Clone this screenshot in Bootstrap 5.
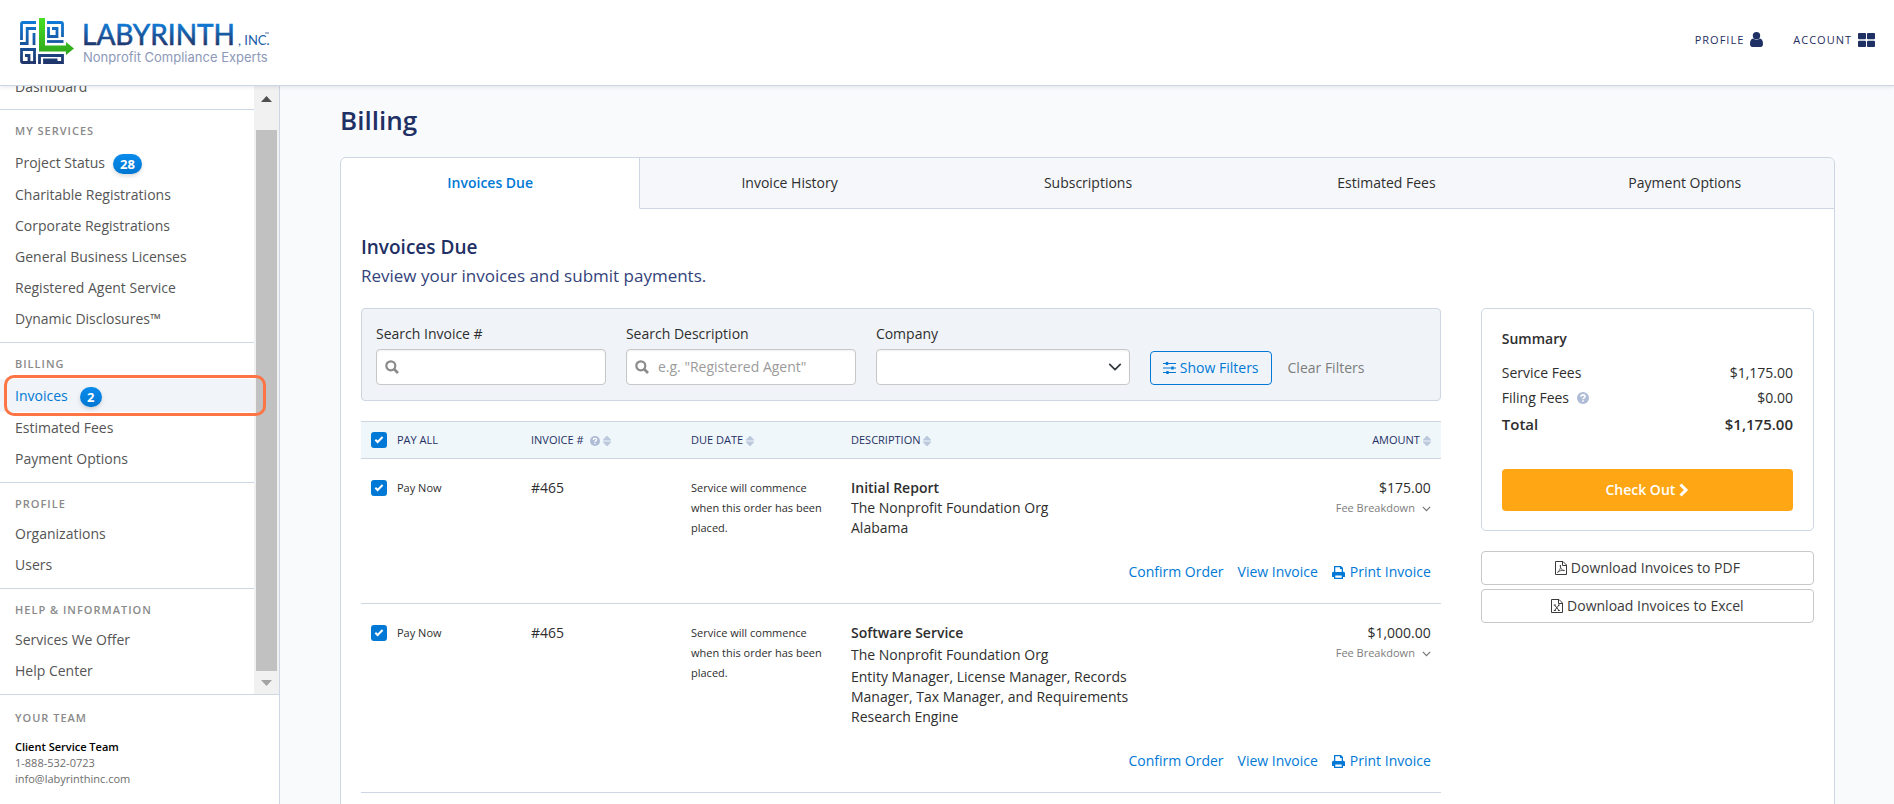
<!DOCTYPE html>
<html lang="en">
<head>
<meta charset="utf-8">
<meta name="viewport" content="width=device-width, initial-scale=1">
<title>Billing</title>
<link href="https://cdn.jsdelivr.net/npm/bootstrap@5.3.0/dist/css/bootstrap.min.css" rel="stylesheet">
<style>
:root{--navy:#1f3064;--blue:#0079d6;--line:#cdd6e3;--ink:#2e2e2e}
body{font-family:"Open Sans","Noto Sans",sans-serif;font-size:14px;line-height:20px;color:var(--ink);background:#f9fafc}
a{color:var(--blue);text-decoration:none}
svg{flex:none}
.app{height:100vh;overflow:hidden}
.topbar{height:86px;background:#fff;border-bottom:1px solid var(--line);box-shadow:0 1px 4px rgba(40,60,100,.12);padding:0 19px 0 18px;z-index:2}
.top-links{gap:30px;padding-bottom:6px}
.top-link{color:var(--navy);font-size:11px;font-weight:500;letter-spacing:1px;gap:6px}
.brand-name{font-family:"Lato",sans-serif;font-size:28px}
.brand-inc{font-family:"Lato",sans-serif;font-size:13px}
.brand-tag{font-family:"Inter",sans-serif;font-size:13px}
.side{width:280px;background:#fff;border-right:1px solid var(--line)}
.shell{min-height:0}
.side-scroll{overflow:hidden;min-height:0}
.side-list{min-width:0}
.bar{width:25px;background:#f1f1f1;padding:10px 2px 8px}
.thumb{background:#c1c1c1;width:21px;margin:28px 0 9px}
.first-item{padding-bottom:7px}
.group{border-top:1px solid var(--line);padding-bottom:8px}
.cap-head{font-size:11px;line-height:16px;font-weight:600;letter-spacing:1px;color:#8a8a8a;text-transform:uppercase;margin:0}
.group .cap-head{padding:13px 15px 6px}
.item{height:31px;padding:0 15px;color:#555;display:flex;align-items:center}
.item.has-count{height:33px;margin-top:1px;position:relative}
.item.on{background:#f1f4f8;color:var(--blue)}
.count{background:linear-gradient(#0a8bec,#0077d2);color:#fff;font-weight:700;font-size:13px;line-height:20px;min-width:22px;text-align:center;padding:0 7px;border-radius:10px;box-shadow:0 2px 4px rgba(0,0,0,.15);margin:2px 0 0 8px}
.on .count{margin-left:12px}
.callout{position:absolute;inset:-4px -12px -4px 4px;border:3px solid #fd7544;border-radius:10px;z-index:1}
.team{border-top:1px solid var(--line);padding:15px;height:110px;font-size:11px;line-height:16px;color:#6d6d6d}
.team .cap-head{margin-bottom:13px}
.team a{color:inherit}
.main{padding:16px 59px 0 60px;overflow:hidden;min-width:0}
h1{font-size:26px;line-height:36px;font-weight:600;color:var(--navy);margin:0 0 19px}
h2{font-size:19px;line-height:28px;font-weight:600;color:var(--navy);margin:0 0 3px}
.lede{font-size:17px;line-height:24px;color:#33437a;margin:0 0 20px}
.panel{background:#fff;border:1px solid var(--line);border-radius:6px;min-height:720px}
.tabs a{color:var(--ink);background:#f5f7fb;border-bottom:1px solid var(--line);padding:15px 0;text-align:center;line-height:20px;flex:1 1 0}
.tabs a.on{background:#fff;border-right:1px solid var(--line);border-bottom-color:#fff;color:var(--blue);font-weight:600;border-radius:6px 0 0 0}
.tabs a:last-child{border-radius:0 6px 0 0}
.body-pad{padding:24px 20px 0}
.split{--bs-gutter-x:40px}
.filters{background:#f0f4f8;border:1px solid var(--line);border-radius:4px;padding:15px 14px;display:grid;grid-template-columns:115fr 115fr 127fr 138fr;column-gap:20px}
.filters label{display:block;line-height:20px;margin-bottom:5px}
.filters .form-control,.filters .form-select{height:36px;font-size:14px;border:1px solid #c8c8c8;border-radius:4px;padding:4px 12px 6px 31px;color:var(--ink);box-shadow:inset 0 1px 2px rgba(0,0,0,.06)}
.filters .form-select{background-position:right 7px center;background-size:14px 14px}
.filters .form-control::placeholder{color:#9b9b9b}
.glass{position:absolute;left:9px;top:11px}
.btn{font-size:14px;line-height:20px;border-radius:4px}
.btn-filter{height:34px;border:1px solid var(--blue);color:var(--blue);padding:0 12px}
.btn-filter:hover{background:var(--blue);color:#fff}
.quiet{color:#7d7d7d}
.btn-clear{height:34px}
.inv{margin:20px 0 0;table-layout:fixed;width:100%;color:var(--ink)}
.inv .w-col{width:160px}
.inv .w-desc{width:300px}
.inv th{background:#eff7fb;border-top:1px solid var(--line);border-bottom:1px solid var(--line);height:37px;padding:0 10px;font-size:11px;line-height:16px;font-weight:500;color:var(--navy);vertical-align:middle}
.inv td{padding:19px 10px 0;vertical-align:top}
.inv .acts td{padding:24px 10px 21px;border-bottom:1px solid var(--line)}
.acts-row{gap:14px}
.print-link{gap:5px}
.fine{font-size:11px;line-height:20px}
.pay{gap:10px;line-height:20px;font-size:11px;font-weight:500}
.inv .form-check-input{width:16px;height:16px;border-radius:3px;margin:0;border:0;background-size:16px;flex:none}
.form-check-input:checked{background-color:var(--blue);background-image:url("data:image/svg+xml,%3csvg xmlns='http://www.w3.org/2000/svg' viewBox='0 0 16 16'%3e%3cpath fill='none' stroke='%23fff' stroke-width='2' d='M4.300 7.700l2.300 2.300 5-5'/%3e%3c/svg%3e")}
.stack{gap:2px}
.summary{border:1px solid var(--line);border-radius:5px;padding:20px 20px 19px}
.summary dl{margin:11px 0 32px}
.summary dt,.summary dd{font-weight:400;margin:0;line-height:25px}
.summary .total{font-size:15px;margin-top:2px}
.summary .total dt,.summary .total dd{font-weight:600}
.btn-pay{background:#ffa614;color:#fff;font-weight:600;height:42px}
.btn-pay:hover{background:#f09a08;color:#fff}
.btn-dl{background:#fff;border:1px solid #c8c8c8;color:#3a3a3a;height:34px;padding:0}
.downloads{margin-top:20px;gap:4px}
</style>
</head>
<body>
<svg width="0" height="0" class="position-absolute" aria-hidden="true">
  <defs>
    <linearGradient id="word" gradientUnits="userSpaceOnUse" x1="0" y1="23" x2="0" y2="46"><stop offset="0" stop-color="#0f7ddb"/><stop offset="1" stop-color="#1f3468"/></linearGradient>
    <linearGradient id="maze" gradientUnits="userSpaceOnUse" x1="0" y1="20" x2="0" y2="64"><stop offset="0" stop-color="#0f7ddb"/><stop offset="1" stop-color="#1f3468"/></linearGradient>
    <linearGradient id="ell" x1="0" y1="0" x2="0" y2="1"><stop offset="0" stop-color="#46e024"/><stop offset="1" stop-color="#2fa51c"/></linearGradient>
  </defs>
  <symbol id="sort" viewBox="0 0 8 10"><path fill="#bcc8dc" d="M3.500 0h1L8 3.800v.8H0v-.8zM3.500 10h1L8 6.200v-.8H0v.8z"/></symbol>
  <symbol id="help" viewBox="0 0 12 12"><circle cx="6" cy="6" r="6" fill="#afbcd6"/><path d="M4 4.700C4 2.300 8 2.300 8 4.500 8 5.800 6 5.800 6 7.300" fill="none" stroke="#fff" stroke-width="1.600"/><path d="M5.200 8.200h1.600v1.500H5.200z" fill="#fff"/></symbol>
  <symbol id="glass" viewBox="0 0 14 14"><circle cx="5.800" cy="5.800" r="4.500" fill="none" stroke="#8b8b8b" stroke-width="2.200"/><path d="M9 9l4 4" stroke="#8b8b8b" stroke-width="2.600"/></symbol>
  <symbol id="print" viewBox="0 0 13 13"><path fill="#0079d6" fill-rule="evenodd" d="M2 0h7l2 2v3.700h.5A1.500 1.500 0 0 1 13 7.200V11h-2v2H2v-2H0V7.200A1.500 1.500 0 0 1 1.500 5.700H2zm1.300 1.300v4.700h6.400V3H8V1.300zm0 8.200v2.200h6.400V9.500z"/></symbol>
  <symbol id="down" viewBox="0 0 9 6"><path d="M.8.8l3.700 3.800L8.200.8" fill="none" stroke="#777" stroke-width="1.200"/></symbol>
</svg>
<div class="app d-flex flex-column">
  <header class="topbar d-flex align-items-center justify-content-between flex-shrink-0">
    <a href="#" aria-label="Labyrinth, Inc.">
      <svg width="262" height="54" viewBox="18 16 262 54" class="d-block">
        <g fill="none" stroke="url(#maze)" stroke-width="2.800">
          <path d="M21.500 40V24a1.500 1.500 0 0 1 1.500-1.500H36"/>
          <path d="M20 43.500h7.200V28.500H36"/>
          <path d="M34 33v12"/>
          <path d="M47 22.500h14a1.500 1.500 0 0 1 1.500 1.500V37"/>
          <path d="M48.500 27v9.500h8.500V28.500h-5"/>
          <path d="M47 41.500h16.500"/>
          <path d="M36 49.500H21.500V61a1.500 1.500 0 0 0 1.500 1.500h6v-7h-4"/>
          <path d="M34.500 49v15"/>
          <path d="M30 62.500h6"/>
          <path d="M39.500 64v-8.500h23v7H44.500V60h13"/>
        </g>
        <path fill="url(#ell)" d="M39 18h6v27.500h21V42l8 6.500-8 6.500v-3.500H39z"/>
        <text class="brand-name" x="82" y="45" fill="url(#word)" stroke="url(#word)" stroke-width=".6">LABYRINTH</text>
        <text class="brand-inc" x="238" y="45" fill="#1a5ea8">, INC.</text>
        <text class="brand-tag" x="83" y="62" fill="#8d99b8">Nonprofit Compliance Experts</text>
        <path d="M265 33h4" stroke="#5570a5"/>
      </svg>
    </a>
    <nav class="top-links d-flex align-items-center">
      <a href="#" class="top-link d-flex align-items-center">PROFILE
        <svg width="13" height="15" viewBox="0 0 13 15" fill="#1f3064"><circle cx="6.500" cy="3.700" r="3.700"/><path d="M3.200 6.600a5 5 0 0 0 6.600 0C12 6.800 13 9 13 12c0 2-1 3-2.500 3h-8C1 15 0 14 0 12c0-3 1-5.200 3.200-5.400z"/></svg></a>
      <a href="#" class="top-link d-flex align-items-center">ACCOUNT
        <svg width="17" height="14" viewBox="0 0 17 14" fill="#1f3064"><rect width="8" height="6.300" rx="1"/><rect x="9" width="8" height="6.300" rx="1"/><rect y="7.700" width="8" height="6.300" rx="1"/><rect x="9" y="7.700" width="8" height="6.300" rx="1"/></svg></a>
    </nav>
  </header>
  <div class="shell d-flex flex-grow-1">
    <aside class="side d-flex flex-column flex-shrink-0">
      <div class="side-scroll d-flex flex-grow-1">
        <nav class="side-list flex-grow-1 d-flex flex-column justify-content-end">
          <div class="first-item"><a href="#" class="item">Dashboard</a></div>
          <div class="group"><h6 class="cap-head">My Services</h6>
            <a href="#" class="item has-count">Project Status <span class="count">28</span></a>
            <a href="#" class="item">Charitable Registrations</a>
            <a href="#" class="item">Corporate Registrations</a>
            <a href="#" class="item">General Business Licenses</a>
            <a href="#" class="item">Registered Agent Service</a>
            <a href="#" class="item">Dynamic Disclosures™</a>
          </div>
          <div class="group"><h6 class="cap-head">Billing</h6>
            <a href="#" class="item has-count on">Invoices <span class="count">2</span><span class="callout"></span></a>
            <a href="#" class="item">Estimated Fees</a>
            <a href="#" class="item">Payment Options</a>
          </div>
          <div class="group"><h6 class="cap-head">Profile</h6>
            <a href="#" class="item">Organizations</a>
            <a href="#" class="item">Users</a>
          </div>
          <div class="group"><h6 class="cap-head">Help &amp; Information</h6>
            <a href="#" class="item">Services We Offer</a>
            <a href="#" class="item">Help Center</a>
          </div>
        </nav>
        <div class="bar d-flex flex-column align-items-center flex-shrink-0" aria-hidden="true">
          <svg width="11" height="6"><path d="M0 6L5.500 0 11 6z" fill="#505050"/></svg>
          <div class="thumb flex-grow-1"></div>
          <svg width="11" height="6"><path d="M0 0l5.500 6L11 0z" fill="#a3a3a3"/></svg>
        </div>
      </div>
      <div class="team flex-shrink-0">
        <h6 class="cap-head">Your Team</h6>
        <div><span class="fw-semibold text-black">Client Service Team</span><br>1-888-532-0723<br><a href="#">info@labyrinthinc.com</a></div>
      </div>
    </aside>
    <main class="main flex-grow-1">
      <h1>Billing</h1>
      <div class="panel">
        <nav class="tabs d-flex">
          <a href="#" class="on">Invoices Due</a><a href="#">Invoice History</a><a href="#">Subscriptions</a><a href="#">Estimated Fees</a><a href="#">Payment Options</a>
        </nav>
        <div class="body-pad">
          <h2>Invoices Due</h2>
          <p class="lede">Review your invoices and submit payments.</p>
          <div class="row split">
            <div class="col-9">
              <form class="filters">
                <div><label for="num">Search Invoice #</label>
                  <div class="position-relative"><svg class="glass" width="14" height="14"><use href="#glass"/></svg><input id="num" type="text" class="form-control"></div></div>
                <div><label for="desc">Search Description</label>
                  <div class="position-relative"><svg class="glass" width="14" height="14"><use href="#glass"/></svg><input id="desc" type="text" class="form-control" placeholder="e.g. &quot;Registered Agent&quot;"></div></div>
                <div><label for="comp">Company</label><select id="comp" class="form-select"><option></option></select></div>
                <div class="d-flex align-items-end gap-3">
                  <button type="button" class="btn btn-filter d-flex align-items-center gap-1"><svg width="13" height="12" fill="none" stroke="currentColor"><path d="M0 1.500h13M0 6h13M0 10.500h13" stroke-width="1.200"/><path d="M4 0v3M9.500 4.500v3M4.500 9v3" stroke-width="2.400"/></svg>Show Filters</button>
                  <button type="reset" class="btn btn-clear quiet border-0 p-0">Clear Filters</button>
                </div>
              </form>
              <table class="inv">
                <colgroup><col class="w-col"><col class="w-col"><col class="w-col"><col class="w-desc"><col></colgroup>
                <thead><tr>
                  <th><label class="pay d-flex align-items-center"><input type="checkbox" class="form-check-input" checked>PAY ALL</label></th>
                  <th>INVOICE # <svg width="10" height="10" class="ms-1"><use href="#help"/></svg> <svg width="8" height="10"><use href="#sort"/></svg></th>
                  <th>DUE DATE <svg width="8" height="10"><use href="#sort"/></svg></th>
                  <th>DESCRIPTION <svg width="8" height="10"><use href="#sort"/></svg></th>
                  <th class="text-end">AMOUNT <svg width="8" height="10"><use href="#sort"/></svg></th>
                </tr></thead>
                <tbody>
                  <tr>
                    <td><label class="pay d-flex align-items-center"><input type="checkbox" class="form-check-input" checked>Pay Now</label></td>
                    <td>#465</td>
                    <td class="fine">Service will commence when this order has been placed.</td>
                    <td><div class="fw-semibold">Initial Report</div><div>The Nonprofit Foundation Org</div><div>Alabama</div></td>
                    <td class="text-end">$175.00<div class="fine quiet">Fee Breakdown <svg width="9" height="6" class="ms-1"><use href="#down"/></svg></div></td>
                  </tr>
                  <tr class="acts"><td colspan="5"><div class="acts-row d-flex justify-content-end"><a href="#">Confirm Order</a><a href="#">View Invoice</a><a href="#" class="print-link d-flex align-items-center"><svg width="13" height="13"><use href="#print"/></svg>Print Invoice</a></div></td></tr>
                  <tr>
                    <td><label class="pay d-flex align-items-center"><input type="checkbox" class="form-check-input" checked>Pay Now</label></td>
                    <td>#465</td>
                    <td class="fine">Service will commence when this order has been placed.</td>
                    <td><div class="stack d-flex flex-column"><div class="fw-semibold">Software Service</div><div>The Nonprofit Foundation Org</div><div>Entity Manager, License Manager, Records Manager, Tax Manager, and Requirements Research Engine</div></div></td>
                    <td class="text-end">$1,000.00<div class="fine quiet">Fee Breakdown <svg width="9" height="6" class="ms-1"><use href="#down"/></svg></div></td>
                  </tr>
                  <tr class="acts"><td colspan="5"><div class="acts-row d-flex justify-content-end"><a href="#">Confirm Order</a><a href="#">View Invoice</a><a href="#" class="print-link d-flex align-items-center"><svg width="13" height="13"><use href="#print"/></svg>Print Invoice</a></div></td></tr>
                </tbody>
              </table>
            </div>
            <div class="col-3">
              <section class="summary">
                <div class="fw-semibold">Summary</div>
                <dl>
                  <div class="d-flex justify-content-between"><dt>Service Fees</dt><dd>$1,175.00</dd></div>
                  <div class="d-flex justify-content-between"><dt class="d-flex align-items-center gap-2">Filing Fees <svg width="12" height="12"><use href="#help"/></svg></dt><dd>$0.00</dd></div>
                  <div class="total d-flex justify-content-between"><dt>Total</dt><dd>$1,175.00</dd></div>
                </dl>
                <button type="button" class="btn btn-pay w-100 d-flex align-items-center justify-content-center gap-1">Check Out <svg width="10" height="14" fill="none" stroke="#fff" stroke-width="3"><path d="M1.500 1.500L7 7l-5.500 5.500"/></svg></button>
              </section>
              <div class="downloads d-flex flex-column">
                <button type="button" class="btn btn-dl d-flex align-items-center justify-content-center gap-1"><svg width="12" height="14" fill="none" stroke="#3a3a3a"><path d="M.5.5h7.500L11.500 4v9.500H.5zM7.500.5v4h4"/><path d="M2.500 11.500C5 9 6 7 5.300 4 5 7 7 9.500 9.500 9.500 7 9 4.500 9.500 2.500 11.500z" stroke-width=".8"/></svg>Download Invoices to PDF</button>
                <button type="button" class="btn btn-dl d-flex align-items-center justify-content-center gap-1"><svg width="12" height="14" fill="none" stroke="#3a3a3a"><path d="M.5.5h7.500L11.500 4v9.500H.5zM7.500.5v4h4"/><path d="M3.500 6l4.500 5.500M8 6l-4.500 5.500M2.800 6h2M2.800 11.500h2M7 6h1.800M7 11.500h1.800" stroke-width="1"/></svg>Download Invoices to Excel</button>
              </div>
            </div>
          </div>
        </div>
      </div>
    </main>
  </div>
</div>
<script src="https://cdn.jsdelivr.net/npm/bootstrap@5.3.0/dist/js/bootstrap.bundle.min.js"></script>
</body>
</html>
